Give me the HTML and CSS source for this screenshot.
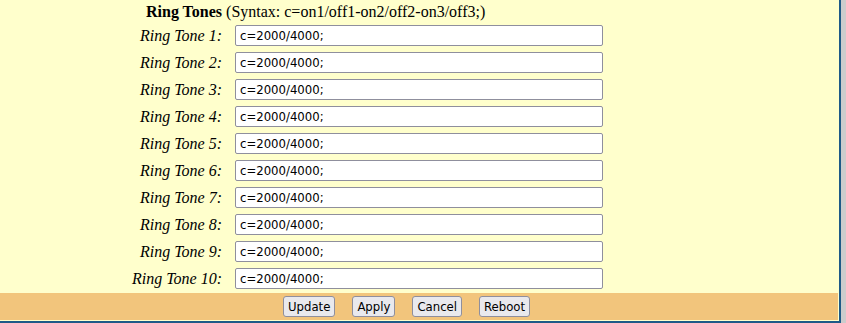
FILE: index.html
```html
<!DOCTYPE html>
<html lang="en">
<head>
    <meta charset="UTF-8">
    <title>Ring Tones</title>
    <link rel="stylesheet" href="styles.css">
</head>
<body>

<div class="panel">
    <div class="title"><b>Ring Tones</b> (Syntax: c=on1/off1-on2/off2-on3/off3;)</div>

    <div class="tones">
        <label>Ring Tone 1:</label><input type="text" value="c=2000/4000;">
        <label>Ring Tone 2:</label><input type="text" value="c=2000/4000;">
        <label>Ring Tone 3:</label><input type="text" value="c=2000/4000;">
        <label>Ring Tone 4:</label><input type="text" value="c=2000/4000;">
        <label>Ring Tone 5:</label><input type="text" value="c=2000/4000;">
        <label>Ring Tone 6:</label><input type="text" value="c=2000/4000;">
        <label>Ring Tone 7:</label><input type="text" value="c=2000/4000;">
        <label>Ring Tone 8:</label><input type="text" value="c=2000/4000;">
        <label>Ring Tone 9:</label><input type="text" value="c=2000/4000;">
        <label>Ring Tone 10:</label><input type="text" value="c=2000/4000;">
    </div>

    <div class="actions">
        <button type="button">Update</button>
        <button type="button">Apply</button>
        <button type="button">Cancel</button>
        <button type="button">Reboot</button>
    </div>
</div>

</body>
</html>
```

FILE: styles.css
```css
* {
    box-sizing: border-box;
    margin: 0;
    padding: 0;
}

body {
    background-color: #cccccc;
    font-family: 'Liberation Serif', 'Times New Roman', serif;
    font-size: 16px;
    color: #000;
}

.panel {
    width: 841px;
    height: 323px;
    background-color: #ffffcc;
    border-right: 2px solid #1e5a87;
    border-bottom: 2px solid #1e5a87;
    padding: 0 1px 1px 0;
}

.title {
    height: 22px;
    line-height: 22px;
    padding-left: 146px;
    padding-top: 1px;
}

.tones {
    display: grid;
    grid-template-columns: 222px 368px;
    grid-auto-rows: 27px;
    column-gap: 13px;
    align-items: center;
}

.tones label {
    font-style: italic;
    text-align: right;
}

.tones input {
    height: 21px;
    width: 368px;
    border: 1px solid #8f8f9d;
    border-radius: 2px;
    background: #fff;
    padding: 0 4px;
    font-family: 'DejaVu Sans Condensed', 'DejaVu Sans', Tahoma, sans-serif;
    font-size: 13px;
    color: #000;
}

.actions {
    margin-top: 1px;
    height: 27px;
    background-color: #f2c57c;
    display: flex;
    align-items: center;
    gap: 17px;
    padding-left: 283px;
}

.actions button {
    height: 21px;
    padding: 0 4px;
    border: 1px solid #8f8f9d;
    border-radius: 3px;
    background-color: #e9e9ed;
    font-family: 'DejaVu Sans Condensed', 'DejaVu Sans', Tahoma, sans-serif;
    font-size: 13px;
    color: #000;
}
```
